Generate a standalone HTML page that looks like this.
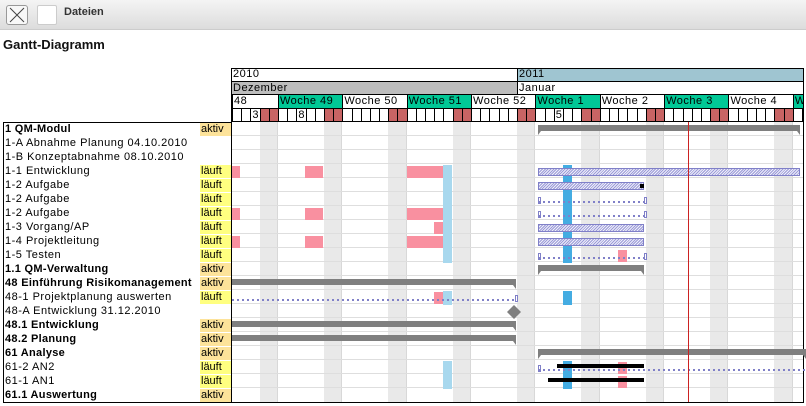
<!DOCTYPE html>
<html><head><meta charset="utf-8">
<style>
*{margin:0;padding:0;box-sizing:border-box}
body{width:806px;height:406px;overflow:hidden;background:#fff;font-family:"Liberation Sans",sans-serif;position:relative}
.a{position:absolute}
#tb{left:0;top:0;width:806px;height:30px;background:linear-gradient(#f4f4f4,#dcdcdc);border-bottom:1px solid #ccc}
.lbl{font-size:11px;letter-spacing:0.5px;white-space:nowrap;color:#000}
</style></head><body>
<div id="tb" class="a"></div>
<div class="a" style="left:6px;top:5px;width:22px;height:20px;border:1px solid #999;border-radius:3px;background:#f8f8f8"><svg width="20" height="18"><path d="M3 2L17 16M17 2L3 16" stroke="#444" stroke-width="1"/></svg></div>
<div class="a" style="left:37px;top:5px;width:20px;height:20px;border:1px solid #ccc;border-radius:2px;background:#fff"></div>
<div class="a" style="left:64px;top:6px;font-size:11px;font-weight:bold;color:#333">Dateien</div>
<div class="a" style="left:3px;top:37px;font-size:13px;font-weight:bold;color:#111">Gantt-Diagramm</div>
<div id="g"></div>
<script>
var H='';var D=9.194,X0=232;
function x(i){return X0+i*D}
function box(l,t,w,h,st){H+='<div class="a" style="left:'+l+'px;top:'+t+'px;width:'+w+'px;height:'+h+'px;'+(st||'')+'"></div>'}
function txt(l,t,s,st){H+='<div class="a lbl" style="left:'+l+'px;top:'+t+'px;'+(st||'')+'">'+s+'</div>'}
function dw(i){return (i+2)%7}
for(var i=0;i<63;i++){var xl=x(i);if(xl>803)break;var d=dw(i);
 if(d>=5)box(xl,122,Math.min(D,803-xl),280,'background:#e9e9e9');
 if(d==0)box(xl-1,122,1,280,'background:#d8d8d8');}
for(var r=1;r<20;r++)box(231,122+r*14-1,572,1,'background:#dedede');
box(231,68,573,54,'border:1px solid #000;background:#fff');
box(517,69,286,12,'background:#9fc5d1');box(517,69,1,12,'background:#000');
txt(233,68,'2010');txt(519,68,'2011');
box(232,81,285,13,'background:#bdbdbd');box(232,81,571,1,'background:#000');box(232,94,571,1,'background:#000');box(517,81,1,13,'background:#000');
txt(233,82,'Dezember');txt(519,82,'Januar');
var wk=[[48,0,5],[49,5,12],[50,12,19],[51,19,26],[52,26,33],[1,33,40],[2,40,47],[3,47,54],[4,54,61],[5,61,68]];
wk.forEach(function(w,k){var l=x(w[1]),rr=Math.min(x(w[2]),803);if(l>=803)return;
 box(l,95,rr-l,13,(k%2?'background:#00c896;':'')+'border-left:1px solid #000');
 txt(l+2,95,w[0]==48?'48':'Woche '+w[0],'width:'+(rr-l-2)+'px;overflow:hidden');});
box(232,108,571,1,'background:#000');
for(var i=0;i<63;i++){var l=x(i);if(l>=803)break;var w=Math.min(D,803-l);
 box(l,109,w,13,(dw(i)>=5?'background:#c86464;':'')+'border-left:1px solid #000');}
txt(x(2)+2,109,'3');txt(x(7)+2,109,'8');txt(x(35)+2,109,'5');
box(232,121,571,1,'background:#000');
var rows=[['1 QM-Modul','aktiv',1],['1-A Abnahme Planung 04.10.2010','',0],['1-B Konzeptabnahme 08.10.2010','',0],['1-1 Entwicklung','läuft',0],['1-2 Aufgabe','läuft',0],['1-2 Aufgabe','läuft',0],['1-2 Aufgabe','läuft',0],['1-3 Vorgang/AP','läuft',0],['1-4 Projektleitung','läuft',0],['1-5 Testen','läuft',0],['1.1 QM-Verwaltung','aktiv',1],['48 Einführung Risikomanagement','aktiv',1],['48-1 Projektplanung auswerten','läuft',0],['48-A Entwicklung 31.12.2010','',0],['48.1 Entwicklung','aktiv',1],['48.2 Planung','aktiv',1],['61 Analyse','aktiv',1],['61-2 AN2','läuft',0],['61-1 AN1','läuft',0],['61.1 Auswertung','aktiv',1]];
box(3,122,229,281,'border:1px solid #000;background:#fff');
rows.forEach(function(r,k){var t=122+k*14;
 if(r[1])box(200,t+1,31,13,'background:'+(r[1]=='aktiv'?'#fde39a':'#ffff80'));
 txt(5,t+1,r[0],r[2]?'font-weight:bold;letter-spacing:0.3px':'');txt(201,t+1,r[1],'letter-spacing:0');});
box(231,122,1,281,'background:#000');box(803,122,1,281,'background:#000');box(231,402,573,1,'background:#000');
function T(r){return 122+r*14}
[[3,[[232,240],[305,323],[407,443]]],[6,[[232,240],[305,323],[407,443]]],[8,[[232,240],[305,323],[407,443]]],[7,[[434,443]]],[12,[[434,443]]],[9,[[618,627]]],[17,[[618,627]]],[18,[[618,627]]]].forEach(function(a){a[1].forEach(function(s){box(s[0],T(a[0])+2,s[1]-s[0],12,'background:#f990a0')})});
[3,4,5,6,7,8,9,12,17,18].forEach(function(r){box(443,T(r)+1,9,14,'background:#a8d8ee')});
[3,4,5,6,7,8,9,12,17,18].forEach(function(r){box(563,T(r)+1,9,14,'background:#44ace2')});
function sum(r,l,rr,both){var t=T(r)+3;box(l,t,rr-l,6,'background:#7f7f7f');
 H+='<svg class="a" style="left:'+(rr-3)+'px;top:'+(t+6)+'px" width="3" height="4"><path d="M0 0H3V4Z" fill="#7f7f7f"/></svg>';
 if(both)H+='<svg class="a" style="left:'+l+'px;top:'+(t+6)+'px" width="3" height="4"><path d="M0 0H3L0 4Z" fill="#7f7f7f"/></svg>';}
sum(0,538,800,1);sum(10,538,644,1);sum(16,538,806,1);sum(11,232,516,0);sum(14,232,516,0);sum(15,232,516,0);
var hat='background:repeating-linear-gradient(135deg,#9c9cd8 0 1px,#eeeefa 1px 2px);border:1px solid #8080c8';
box(538,T(3)+4,262,8,hat);box(538,T(4)+4,106,8,hat);box(538,T(7)+4,106,8,hat);box(538,T(8)+4,106,8,hat);
box(640,T(4)+6,4,4,'background:#000');
function dot(r,l,rr,ends){var y=T(r)+9;box(l,y,rr-l,2,'background:repeating-linear-gradient(90deg,#8080c8 0 2px,transparent 2px 5px)');
 if(ends&1)box(l,y-4,3,7,'border:1px solid #8080c8');if(ends&2)box(rr-3,y-4,3,7,'border:1px solid #8080c8');}
dot(5,538,647,3);dot(6,538,647,3);dot(9,538,647,3);dot(12,232,518,2);dot(17,538,806,1);
box(557,T(17)+4,87,4,'background:#000');box(548,T(18)+4,96,4,'background:#000');
H+='<svg class="a" style="left:506px;top:304px" width="16" height="16"><path d="M8 1L15 8L8 15L1 8Z" fill="#7f7f7f"/></svg>';
box(688,122,1,280,'background:#cc2222');
document.getElementById('g').innerHTML=H;
</script>
</body></html>
